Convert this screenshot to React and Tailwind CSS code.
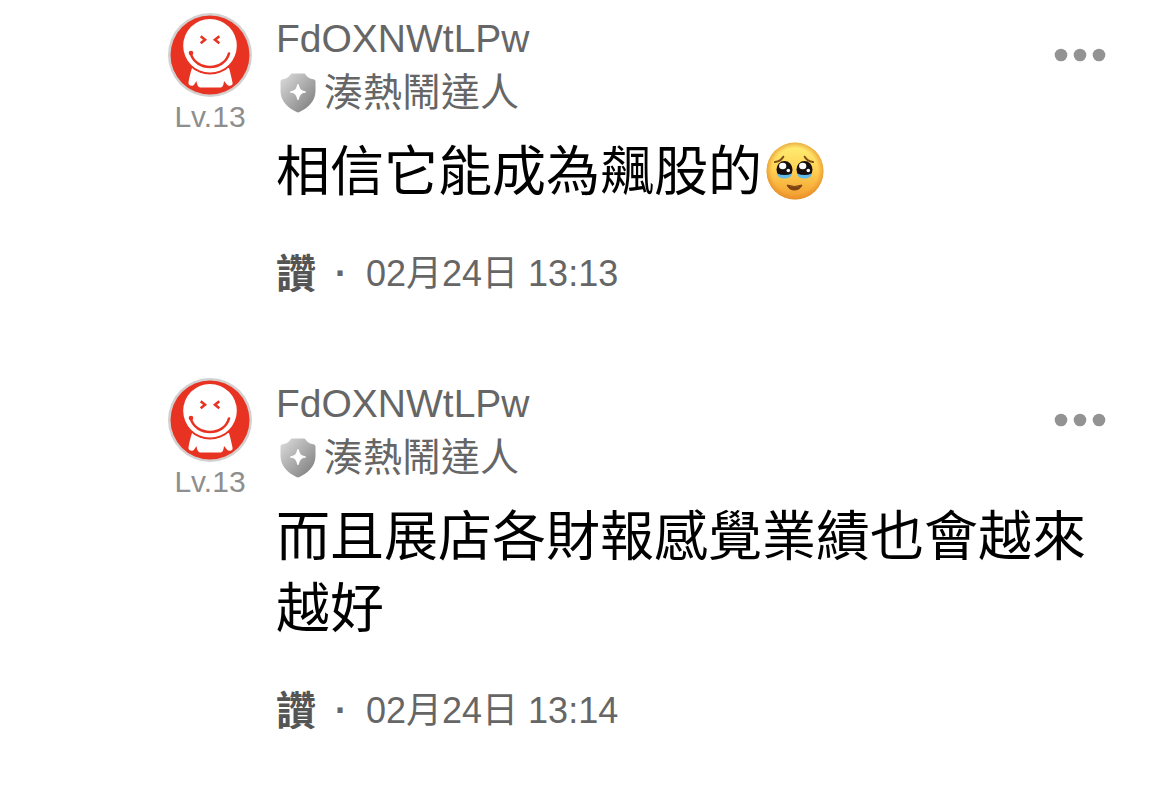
import { useId } from 'react';

const comments = [
  {
    id: 1,
    author: 'FdOXNWtLPw',
    level: 13,
    title: '湊熱鬧達人',
    message: '相信它能成為飆股的',
    touched: true,
    date: '02月24日 13:13',
  },
  {
    id: 2,
    author: 'FdOXNWtLPw',
    level: 13,
    title: '湊熱鬧達人',
    message: '而且展店各財報感覺業績也會越來越好',
    touched: false,
    date: '02月24日 13:14',
  },
];

function Avatar() {
  return (
    <svg viewBox="0 0 84 84" className="size-21" aria-hidden="true">
      <circle cx="42" cy="42" r="42" fill="#d3d0d0" />
      <circle cx="42" cy="42" r="39.5" fill="#e83323" />
      <path
        d="M24 55C22.500 60 21 65 20.500 69.500C20 73 25.500 74 26.500 71L28.500 68C29 72 30 74.500 33 74.500H52C55 74.500 55.500 72 56 68L58.500 71C60 74 65.500 73 64.500 69.500C63.500 65 62.500 60 61 55Z"
        fill="#fff"
      />
      <circle cx="42" cy="33" r="28.5" fill="#e83323" />
      <circle cx="42" cy="32.8" r="26.8" fill="#fff" />
      <path
        d="M32.7 23.2L37 26.7L32.7 30.2M51.3 23.2L47 26.7L51.3 30.2"
        fill="none"
        stroke="#e83323"
        strokeWidth="2.6"
      />
      <circle cx="23" cy="40" r="2.3" fill="#e83323" />
      <path
        d="M22.7 40.5C28 58.500 56 58.500 61 40.5"
        fill="none"
        stroke="#e83323"
        strokeWidth="2.6"
        strokeLinecap="round"
      />
    </svg>
  );
}

function Shield() {
  const fill = useId();
  return (
    <svg viewBox="0 0 36 40" className="h-10 w-9 shrink-0" aria-hidden="true">
      <linearGradient id={fill} x1="0" y1="0" x2="1" y2="1">
        <stop offset="0" stopColor="#dedede" />
        <stop offset="0.5" stopColor="#ababab" />
        <stop offset="1" stopColor="#777" />
      </linearGradient>
      <path
        d="M10.500 1.500Q11 .5 12 .5H24Q25 .5 25.500 1.500C27 4 30 6 33.500 6.300Q35.500 6.500 35.500 8.500V18C35.500 28 28 35 19.500 39Q18 39.800 16.500 39C8 35 .5 28 .5 18V8.500Q.5 6.500 2.500 6.300C6 6 9 4 10.500 1.500Z"
        fill={`url(#${fill})`}
      />
      <path
        d="M18 11.500C19.500 17 20.500 18 25.500 19C20.500 20 19.500 21 18 26.500C16.500 21 15.500 20 10.500 19C15.500 18 16.500 17 18 11.500Z"
        fill="#fff"
        stroke="#fff"
        strokeWidth="1.2"
        strokeLinejoin="round"
      />
    </svg>
  );
}

function TouchedFace() {
  const id = useId();
  return (
    <svg
      viewBox="0 0 58 58"
      className="-mt-1.5 mb-1.5 ml-1 inline-block size-[58px] align-middle"
      role="img"
      aria-label="🥹"
    >
      <defs>
        <linearGradient id={`${id}skin`} x1="0" y1="0" x2="0" y2="1">
          <stop offset="0" stopColor="#fff176" />
          <stop offset="0.5" stopColor="#ffd052" />
          <stop offset="1" stopColor="#f29a2e" />
        </linearGradient>
        <radialGradient id={`${id}rim`}>
          <stop offset="0.8" stopColor="#e88a25" stopOpacity="0" />
          <stop offset="1" stopColor="#e08a28" stopOpacity="0.65" />
        </radialGradient>
      </defs>
      <circle cx="29" cy="29" r="28.500" fill={`url(#${id}skin)`} />
      <circle cx="29" cy="29" r="28.500" fill={`url(#${id}rim)`} />
      <path
        d="M9 20C12.500 19.500 15.500 18 17.300 14.700M38.700 14.700C40.500 18 43.500 19.500 47 20"
        fill="none"
        stroke="#7d4c16"
        strokeWidth="2"
        strokeLinecap="round"
      />
      <ellipse cx="18.500" cy="27.500" rx="8" ry="8.500" fill="#15100e" />
      <ellipse cx="38.500" cy="27.500" rx="8" ry="8.500" fill="#15100e" />
      <g fill="#fff">
        <ellipse cx="16.700" cy="24" rx="3.600" ry="3.200" />
        <circle cx="22.300" cy="28.500" r="1.800" />
        <ellipse cx="36.700" cy="24" rx="3.600" ry="3.200" />
        <circle cx="42.300" cy="28.500" r="1.800" />
      </g>
      <path
        d="M11 31.500Q18.500 34.500 26 31.500Q25 36.500 18.500 36.500Q12 36.500 11 31.500ZM31 31.500Q38.500 34.500 46 31.500Q45 36.500 38.500 36.500Q32 36.500 31 31.500Z"
        fill="#62bceb"
      />
      <path
        d="M21 43Q28.500 46 36 43Q34 48 28.500 48Q23 48 21 43Z"
        fill="#7d4212"
        stroke="#7d4212"
        strokeLinejoin="round"
      />
    </svg>
  );
}

function Comment({ author, level, title, message, touched, date }) {
  return (
    <article className="flex gap-6">
      <div className="flex w-21 shrink-0 flex-col items-center pt-px">
        <Avatar />
        <span className="text-[30px] leading-10 text-[#8e8e8e]">Lv.{level}</span>
      </div>
      <div className="min-w-0 flex-1">
        <header className="flex items-start justify-between">
          <div className="text-[39px] leading-[54px] text-[#666]">
            <h2>{author}</h2>
            <p className="flex items-center gap-2 pl-1">
              <Shield />
              {title}
            </p>
          </div>
          <button type="button" aria-label="更多" className="pt-9">
            <svg viewBox="0 0 52 14" className="h-3.5 w-13" fill="#939393" aria-hidden="true">
              <circle cx="7" cy="7" r="6.300" />
              <circle cx="26" cy="7" r="6.300" />
              <circle cx="45" cy="7" r="6.300" />
            </svg>
          </button>
        </header>
        <p className="mt-4 text-[54px] leading-[72px] text-black">
          {message}
          {touched && <TouchedFace />}
        </p>
        <footer className="mt-[39px] flex items-center text-[36px] leading-[54px] text-[#666]">
          <button type="button" className="text-[40px] font-bold text-[#555]">
            讚
          </button>
          <span className="w-[50px] text-center font-bold">·</span>
          <time>{date}</time>
        </footer>
      </div>
    </article>
  );
}

export default function App() {
  return (
    <main className="flex min-h-screen flex-col gap-19 bg-white pt-3 pr-16 pb-9 pl-42 font-['Liberation_Sans','Noto_Sans_CJK_TC',sans-serif]">
      {comments.map((comment) => (
        <Comment key={comment.id} {...comment} />
      ))}
    </main>
  );
}
